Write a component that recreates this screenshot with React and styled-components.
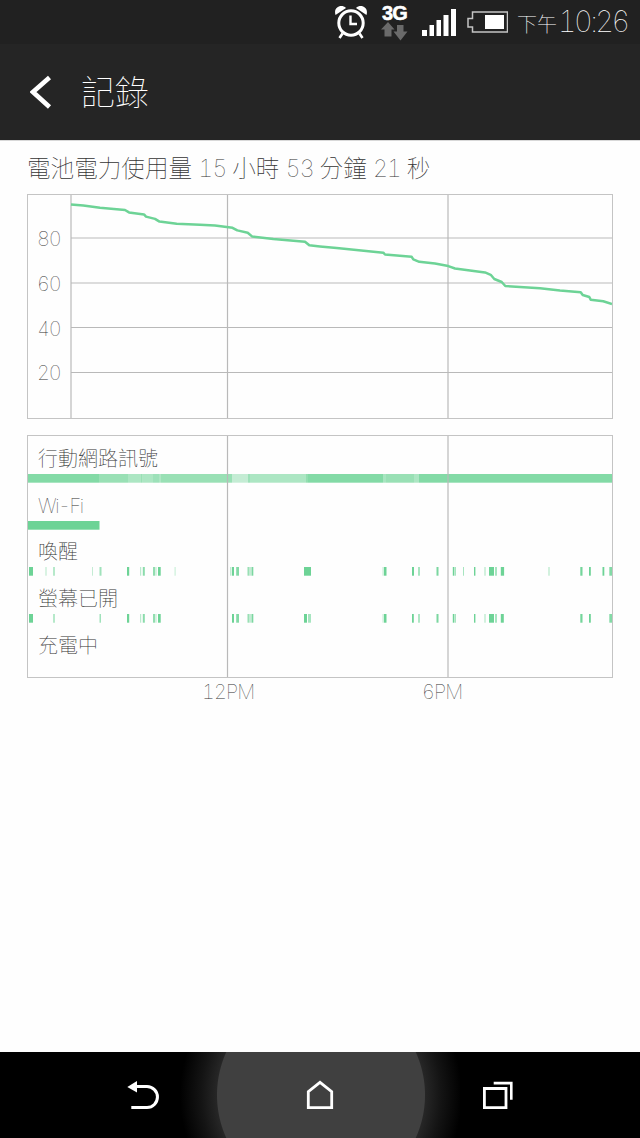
import React from 'react'
import styled, { createGlobalStyle } from "styled-components";

const GlobalStyle = createGlobalStyle`
* {
box-sizing: border-box;
}
body {
margin: 0;
background: #fefefe;
font-family: Inter, "Noto Sans CJK TC", sans-serif;
font-weight: 100;
font-variant-numeric: tabular-nums;
}
svg {
display: block;
flex: none;
}
`;

const GREEN = "#6dd396";

const level = [
  [71, 204.4], [83.3, 205.5], [100, 207.8], [125, 210], [129, 212.4], [144, 214.4],
  [146, 216.6], [155, 218.9], [159.5, 221.6], [176.7, 223.8], [200, 224.7], [215, 225.5],
  [232.5, 227.8], [237.3, 230.4], [247.7, 232.7], [252.3, 236.6], [273.3, 239.1],
  [305, 241.7], [309.3, 245.3], [320, 246.4], [336.7, 248], [383.3, 252.7], [385, 254.5],
  [411.7, 256.8], [413.3, 259.4], [419.3, 261.8], [435, 263.6], [448.3, 266.1],
  [455, 268.5], [485, 272.4], [490.7, 274.8], [494.3, 279], [501.7, 282], [505.3, 286],
  [540, 288.3], [560, 290.5], [580.7, 292.3], [582.7, 295], [589.3, 297],
  [590.7, 299.7], [603.3, 301.3], [612, 304],
];

// every segment is [x, width, opacity]
const signal = [
  [28, 71, .85], [99, 29, .7], [128, 12.5, .57], [140.5, 2, .7], [142.5, 10.5, .57],
  [153, 6, .67], [159, 1.5, .57], [160.5, 71.5, .7], [232, 16, .4], [248, 2, .67],
  [250, 56, .57], [306, 2, .75], [308, 75, .85], [383, 3, .6], [386, 28, .7],
  [414, 5, .57], [419, 193, .85],
];

const wifi = [[28, 71.5, 1]];

const awake = [
  [29, 4, 1], [45.5, 1, .5], [53, 2, .5], [92, 1, .4], [99.5, 2, .65], [127, 2.2, 1],
  [140, 1.2, .45], [142.8, 2, .8], [153, 2, .75], [155.3, 1.3, .4], [158, 2.7, 1],
  [174.5, 1.2, .35], [230, 1.5, .4], [232, 2, 1], [236.2, 2.8, .85], [247.5, 1.7, .7],
  [249.2, 2.5, .4], [251.7, 1.6, .9], [304, 7, 1], [382.5, 1.2, .4], [384, 2.5, 1],
  [412, 2, 1], [418, 2, .6], [436.5, 2, .9], [452.8, 1.4, 1], [454.5, 1.5, .6],
  [463, 1, .6], [474, 1.4, 1], [484, 2, .3], [489, 5, 1], [495, 2, .6], [500.8, 3.3, 1],
  [548, 2, .3], [580.3, 2.2, .95], [589, 1.8, 1], [602.5, 1.8, 1], [609.3, 2.7, .85],
];

const screenOn = [
  [29, 4, 1], [53, 2, .5], [99.5, 1.5, .65], [127, 2.2, 1], [140, 1.2, .45],
  [142.8, 2, .8], [153, 2, .75], [155.3, 1.3, .4], [158, 2.7, 1], [232, 2, 1],
  [236.2, 2.8, .85], [247.5, 1.7, .7], [249.2, 2.5, .4], [251.7, 1.6, .9],
  [304, 3, 1], [308, 3, .6], [382.5, 1.2, .4], [384, 2.5, 1], [412, 1.8, 1],
  [418, 2, .55], [436.5, 2, .9], [452.8, 1.4, 1], [454.5, 1.5, .6], [474, 1.4, 1],
  [484, 2, .3], [489, 5, 1], [495, 2, .6], [500.8, 3, 1], [580.3, 2.2, .95],
  [589, 1.8, 1], [609.3, 2.7, .85],
];

const rows = [
  { label: "行動網路訊號", data: signal },
  { label: "Wi-Fi", data: wifi, spacing: "-1.4px" },
  { label: "喚醒", data: awake },
  { label: "螢幕已開", data: screenOn },
  { label: "充電中", data: [] },
];

const AlarmIcon = () => (
  <svg width="34" height="34" viewBox="334 5 34 34" fill="none" stroke="#fff">
    <circle cx="351" cy="23" r="12.2" strokeWidth="3" />
    <path d="M350.500 15.500V24H357" strokeWidth="2.400" />
    <path d="M342.500 33.500L339.500 38M359.500 33.500L362.500 38" strokeWidth="2.600" />
    <path d="M335.500 15C333 7 341.500 3.500 346 8Z M366.500 15C369 7 360.500 3.500 356 8Z" fill="#fff" stroke="none" />
  </svg>
)

const DataArrows = () => (
  <svg width="27" height="19" viewBox="381 22 27 19" fill="#6a6a6a">
    <path d="M388 22L394.500 29.500H391.500V36.500H384.500V29.500H381Z" />
    <path d="M397 25H403.500V31.500H407.500L400.500 40.500L393.500 31.500H397Z" />
  </svg>
)

const SignalIcon = () => (
  <svg width="34" height="27" viewBox="422 10 34 27" fill="#fff">
    <path d="M422 31H427V37H422ZM429.500 26H434V37H429.500ZM436.500 21H441V37H436.500ZM443.500 16H448.500V37H443.500ZM451 10H456V37H451Z" />
  </svg>
)

const BatteryIcon = () => (
  <svg width="41" height="22" viewBox="467 11 41 22">
    <path d="M472.500 12H507.500V32H472.500V27H468V18.500H472.500Z" fill="none" stroke="#c4c4c4" strokeWidth="1.500" />
    <rect x="485" y="15" width="19" height="14" fill="#fff" />
  </svg>
)

const BackIcon = () => (
  <svg width="32" height="28" viewBox="127 1080 32 28">
    <path d="M136 1085.600H147A10.300 10.300 0 0 1 147 1106.500H131.300" fill="none" stroke="#fff" strokeWidth="3" />
    <path d="M127.300 1086L137 1080V1091.500Z" fill="#fff" />
  </svg>
)

const HomeIcon = () => (
  <svg width="28" height="30" viewBox="306 1079 28 30">
    <path d="M308.300 1106.600V1090.600L320 1081.300L331.700 1090.600V1106.600Z" fill="none" stroke="#fff" strokeWidth="2.800" />
  </svg>
)

const RecentIcon = () => (
  <svg width="32" height="30" viewBox="481 1079 32 30" fill="none" stroke="#fff" strokeWidth="2.800">
    <path d="M484.400 1087.500H506V1106.600H484.400Z" />
    <path d="M493.700 1082.100H511.300V1098.700" strokeWidth="2.600" />
  </svg>
)

const App = () => {
  return (
    <Screen>
      <GlobalStyle />
      <StatusBar>
        <AlarmIcon />
        <Network>
          <NetworkType>3G</NetworkType>
          <DataArrows />
        </Network>
        <SignalIcon />
        <Battery><BatteryIcon /></Battery>
        <Clock><Period>下午</Period>10:26</Clock>
      </StatusBar>
      <Header>
        <svg width="22" height="34" viewBox="30 75 22 34">
          <path d="M49.500 77.500L33 92L49.500 107" fill="none" stroke="#fff" strokeWidth="4.600" />
        </svg>
        <Title>記錄</Title>
      </Header>
      <Content>
        <Summary>
          電池電力使用量 <Num>15</Num> 小時 <Num>53</Num> 分鐘 <Num>21</Num> 秒
        </Summary>
        <LevelChart>
          <Scale>
            {[80, 60, 40, 20].map((n) => <Tick key={n}>{n}</Tick>)}
          </Scale>
          <svg width="542" height="223" viewBox="70 195 542 223" fill="none">
            <path d="M71 194V418M227.500 194V418M448 194V418M71 238H612M71 283H612M71 327.500H612M71 372.500H612" stroke="#b9b9b9" strokeWidth="1.200" />
            <polyline points={level.join(" ")} stroke={GREEN} strokeWidth="2.500" strokeLinejoin="round" />
          </svg>
        </LevelChart>
        <History>
          {rows.map(({ label, data, spacing }) => (
            <Row key={label}>
              <Label $spacing={spacing}>{label}</Label>
              <svg width="584" height="9" viewBox="28 0 584 9">
                {data.map(([x, w, o]) => (
                  <rect key={x} x={x} y="0" width={w} height="8.700" fill={GREEN} opacity={o} />
                ))}
              </svg>
            </Row>
          ))}
          <GridLines width="584" height="241" viewBox="28 436 584 241">
            <path d="M227.500 436V677M448 436V677" stroke="#b9b9b9" strokeWidth="1.200" />
          </GridLines>
        </History>
        <Hours>
          <Hour $width={50}>12PM</Hour>
          <Hour $width={40}>6PM</Hour>
        </Hours>
      </Content>
      <NavBar>
        <NavButton $side="right"><BackIcon /></NavButton>
        <HomeButton><HomeIcon /></HomeButton>
        <NavButton $side="left"><RecentIcon /></NavButton>
      </NavBar>
    </Screen>
  )
}

export default App

const Screen = styled.div`
width: 640px;
height: 1138px;
display: flex;
flex-direction: column;
overflow: hidden;
`;

const StatusBar = styled.div`
height: 44px;
flex: none;
display: flex;
align-items: center;
padding-left: 334px;
background-color: #212121;
color: #fff;
`;

const Network = styled.div`
width: 27px;
height: 44px;
margin: 0 14px 0 13px;
padding-top: 3px;
`;

const NetworkType = styled.div`
height: 19px;
padding-left: 1px;
font-family: "Liberation Sans", sans-serif;
font-weight: bold;
font-size: 20px;
line-height: 20px;
letter-spacing: -.9px;
color: #fff;
-webkit-text-stroke: .5px #fff;
`;

const Battery = styled.div`
margin-left: 11px;
`;

const Clock = styled.div`
display: flex;
align-items: baseline;
margin-left: 9px;
padding-top: 2px;
font-size: 29px;
line-height: 44px;
letter-spacing: -2.600px;
white-space: nowrap;
`;

const Period = styled.span`
margin-right: 1px;
font-size: 20px;
letter-spacing: 0;
`;

const Header = styled.div`
height: 96px;
flex: none;
display: flex;
align-items: center;
gap: 29px;
padding-left: 30px;
background-color: #252525;
color: #fff;
`;

const Title = styled.div`
padding-top: 1px;
font-size: 34px;
line-height: 48px;
`;

const Content = styled.div`
flex: 1;
padding: 0 27px;
border-top: 1px solid #d8d8d8;
color: #333;
`;

const Summary = styled.div`
height: 53px;
padding-top: 1px;
font-size: 23.6px;
line-height: 53px;
word-spacing: -.2px;
white-space: nowrap;
`;

const Num = styled.span`
letter-spacing: -1.3px;
`;

const LevelChart = styled.div`
width: 586px;
height: 225px;
display: flex;
border: 1px solid #c4c4c4;
`;

const Scale = styled.div`
width: 42px;
padding: 21px 0 0 9px;
`;

const Tick = styled.div`
height: 44.800px;
font-size: 20px;
line-height: 46px;
letter-spacing: -1.2px;
`;

const History = styled.div`
position: relative;
width: 586px;
height: 243px;
margin-top: 16px;
border: 1px solid #c4c4c4;
`;

const Row = styled.div`
height: 46.700px;
`;

const Label = styled.div`
height: 38px;
padding: 2px 0 0 10px;
font-size: 20px;
line-height: 43px;
letter-spacing: ${({ $spacing }) => $spacing || "0"};
white-space: nowrap;
`;

const GridLines = styled.svg`
position: absolute;
top: 0;
left: 0;
`;

const Hours = styled.div`
display: flex;
gap: 170px;
padding-left: 175px;
font-size: 20px;
line-height: 28px;
letter-spacing: -.9px;
`;

const Hour = styled.div`
width: ${({ $width }) => $width}px;
white-space: nowrap;
`;

const NavBar = styled.div`
height: 86px;
flex: none;
display: flex;
justify-content: center;
background-color: #000;
`;

const NavButton = styled.div`
width: 180px;
display: flex;
align-items: center;
justify-content: ${({ $side }) => $side === "right" ? "flex-end" : "flex-start"};
padding: 0 21px;
`;

const HomeButton = styled(NavButton)`
width: 280px;
justify-content: center;
background: radial-gradient(circle at 141px 43px, #404040 103.500px, #262626 104.500px, #141414 120px, #050505 136px, #000 141px);
`;
